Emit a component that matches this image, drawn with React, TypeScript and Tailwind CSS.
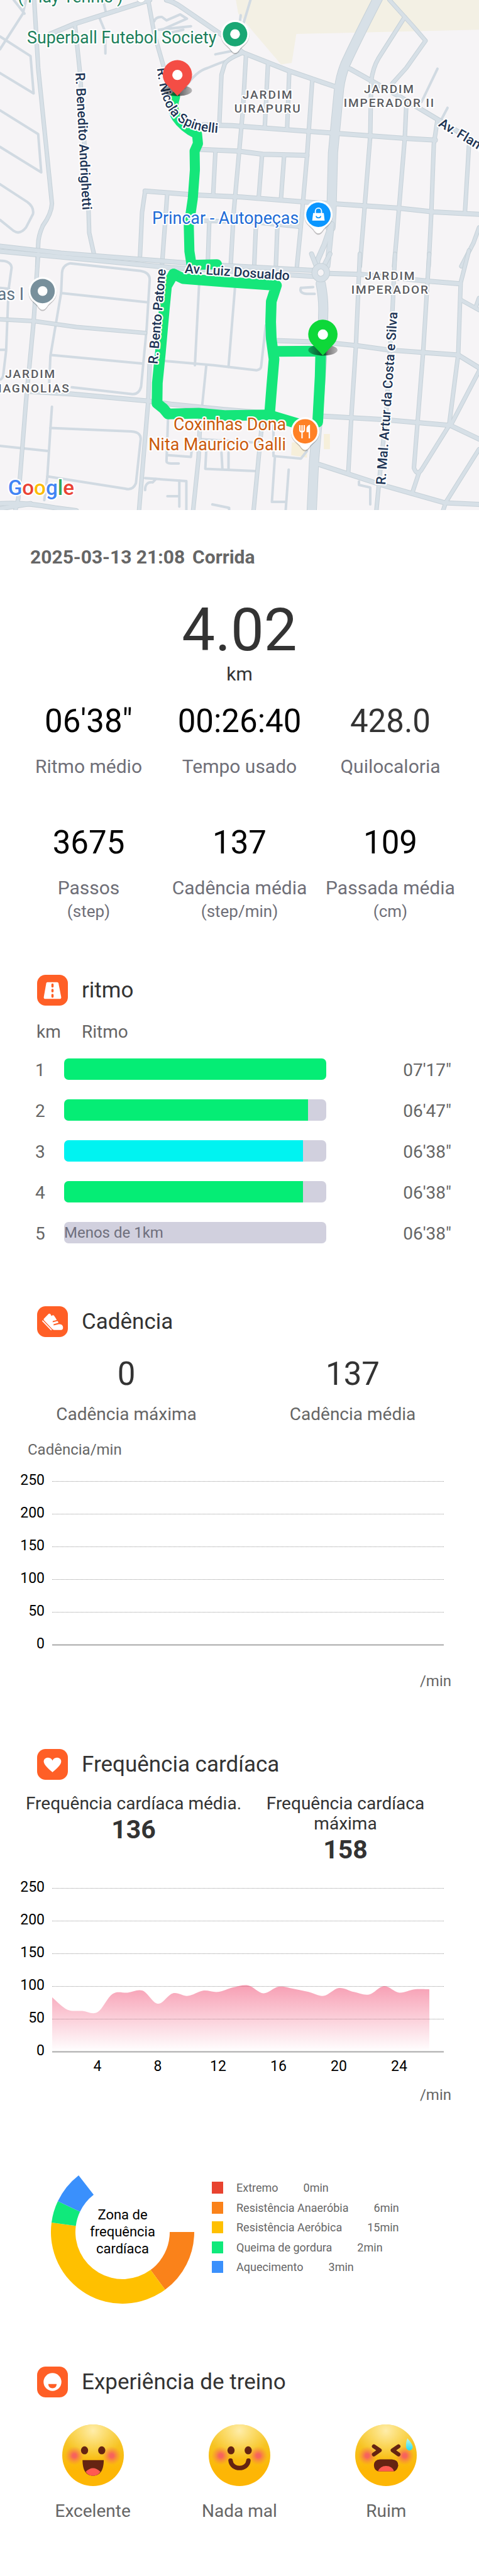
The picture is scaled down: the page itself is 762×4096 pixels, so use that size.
import type { ReactNode } from "react";

/* ---------- Map ---------- */

const MINOR_ROADS_NORTH = [
  "M112 0 L125 400 L160 1020 L170 1200 Q168 1260 140 1330 Q125 1390 125 1440 L122 1568",
  "M245 140 L262 430 L290 1250 L292 1370 L308 1500",
  "M485 0 L505 200 L540 420 L560 560",
  "M795 310 Q740 350 735 380 L725 440 L718 730",
  "M805 330 L795 650 L780 950 L765 1250 L755 1568",
  "M877 380 L867 740",
  "M947 420 L940 750",
  "M1022 475 L1005 920 L985 1330 L972 1568",
  "M705 895 L698 1140",
  "M858 910 L847 1160",
  "M930 920 L920 1165",
  "M475 1125 L465 1250 L458 1520",
  "M547 1150 L530 1568",
  "M670 1300 L840 1310 L980 1335",
  "M685 1300 L680 1568",
  "M838 1320 L832 1568",
  "M908 1335 L903 1568",
  "M1275 0 L1325 100 L1350 150 L1393 240 L1330 400 L1285 490 L1270 540",
  "M1325 100 L1240 340 Q1220 400 1215 480",
  "M1215 480 L1212 800 L1190 1300 L1178 1568",
  "M1330 620 L1325 815 L1305 1250 L1290 1568",
  "M1432 705 L1420 850 L1412 1250 L1403 1568",
  "M1535 860 L1522 1250",
  "M1568 1340 L1550 1430 L1510 1568",
];

const STREETS_NORTH = [
  "M165 200 L245 140 L490 0",
  "M545 0 Q570 10 600 50 L730 210 L795 310",
  "M795 310 L950 420 L1105 515",
  "M665 735 L760 740 L1100 785 L1325 815 L1425 825",
  "M650 880 L780 890 L860 908 L1005 915",
  "M475 1125 L640 1148 L790 1160 L1000 1190 L1095 1200 L1300 1225 L1420 1248 L1568 1262",
  "M1145 405 L1215 475 L1300 560 L1430 700 L1568 850",
];

const LANES_NORTH = [
  "M85 0 L75 80 L0 290",
  "M45 0 L80 80",
  "M0 215 L100 330 L110 550 L0 430",
  "M0 650 L125 790 L135 1015 L0 865",
  "M0 1085 L90 1190 Q112 1220 108 1260 L85 1340 Q65 1385 45 1360 L0 1295",
  "M322 90 L345 190 L345 315",
  "M340 20 L348 85",
  "M505 125 Q510 98 530 100 L545 120 L590 85 L612 110 L530 175",
  "M520 175 L625 155",
  "M540 200 L600 175",
  "M820 0 L795 150",
  "M788 90 L785 130",
  "M605 520 Q640 420 680 400 Q720 370 745 355",
  "M705 320 L760 300",
  "M1432 405 L1380 600",
  "M1465 635 L1440 720",
];

const MINOR_ROADS_SOUTH = [
  "M1178 -20 L1165 520 L1150 940 L1140 1270",
  "M1293 -20 L1285 300 L1265 900 L1240 1340 L1232 1492",
  "M1405 -20 L1385 560 L1355 1240 Q1365 1290 1380 1250 L1470 990",
  "M1535 -40 L1508 150 L1500 570 L1470 990",
  "M1508 250 L1568 310",
  "M1568 240 L1558 290",
  "M1568 670 L1475 990",
  "M1568 1130 L1460 1440 L1450 1492",
  "M1350 1385 L1372 1265",
  "M125 -20 L110 380 L85 850 L60 1420 L50 1492",
  "M490 620 L485 850 L455 1492",
  "M655 960 L650 1180 L632 1492",
  "M858 970 L830 1492",
  "M0 365 L110 375 L250 410 L475 445",
];

const STREETS_SOUTH = [
  "M0 -66 L200 -25 L450 10 L700 45 L1035 78",
  "M0 -36 L300 15 L560 60 L1030 112",
  "M1075 95 L1180 100 L1400 140 L1500 155",
  "M900 490 L1060 500 L1170 520 L1270 545 L1500 575 L1568 650",
  "M1060 935 L1250 955 L1475 990 L1568 1070",
  "M1045 1220 L1250 1340 L1455 1445 L1568 1455",
  "M100 790 L235 805 L480 845 L560 865 L730 895 L860 915",
  "M0 1450 Q80 1440 180 1475 L250 1492",
  "M0 1480 L100 1450",
  "M1020 -20 L1035 50",
  "M1080 -20 L1060 50",
];

const LANES_SOUTH = [
  "M0 20 Q35 20 38 60 L28 190 L20 550 L10 700 Q5 720 0 720",
  "M0 180 L30 185",
  "M0 545 H18",
  "M160 780 L165 580 L200 210 L203 90 Q205 45 230 35 L460 80 Q490 90 490 130 L480 420 L462 760 Q455 810 430 805 L235 765",
  "M200 210 L485 265",
  "M168 575 L465 625",
  "M170 880 L165 1010 L155 1290 L145 1430",
  "M165 1005 L430 1025 Q465 1030 460 1080 L445 1330 Q435 1375 410 1362 L155 1290",
  "M0 1110 L155 1140",
  "M652 150 L638 635",
  "M770 160 L748 645",
  "M540 610 L700 635 L840 665 Q855 660 855 640 L870 400",
  "M675 640 L662 870",
  "M550 950 L545 1200 Q545 1212 560 1214 H585",
  "M550 1165 L625 1175 L630 1100",
  "M475 1300 L610 1318 V1492",
  "M475 1370 Q475 1320 500 1325 L510 1305",
  "M587 1315 V1468",
  "M548 1407 H585",
  "M675 1140 L672 1245 L835 1258",
  "M725 1150 L728 1245",
  "M748 1150 V1245",
  "M655 1070 L830 1090",
  "M895 990 V1170 L985 1185 L1005 1140",
  "M900 1170 L890 1440 H935",
  "M945 1250 L935 1492",
  "M695 1455 L750 1475 V1492",
  "M985 180 Q978 212 1005 215 H1030",
  "M985 180 L1025 175",
  "M1175 1320 V1340 L1212 1355 V1455",
];

function Strokes({ paths, width, color }: { paths: string[]; width: number; color: string }) {
  return (
    <g fill="none" stroke={color} strokeWidth={width} strokeLinecap="round" strokeLinejoin="round">
      {paths.map((d) => (
        <path key={d} d={d} vectorEffect="non-scaling-stroke" />
      ))}
    </g>
  );
}

function RoadNetwork({ lanes, minor, streets, major }: { lanes: string[]; minor: string[]; streets: string[]; major: string[] }) {
  return (
    <>
      <Strokes paths={lanes} width={4} color="#d1dae2" />
      <Strokes paths={minor} width={7} color="#c6d1d8" />
      <Strokes paths={streets} width={8} color="#c6d1d8" />
      <Strokes paths={major} width={16} color="#c6d1d8" />
      <Strokes paths={minor} width={5} color="#d7e0e7" />
      <Strokes paths={streets} width={6} color="#d7e0e7" />
      <Strokes paths={major} width={14} color="#d7e0e7" />
    </>
  );
}

function PlacePin({ x, y, color, children }: { x: number; y: number; color: string; children: ReactNode }) {
  return (
    <g transform={`translate(${x} ${y})`}>
      <path
        d="M0 43 C-5 43 -8 39 -12 33 C-18 25 -32 19 -32 0 A32 32 0 0 1 32 0 C32 19 18 25 12 33 C8 39 5 43 0 43Z"
        fill="#000"
        opacity=".22"
        transform="translate(0 2)"
      />
      <path d="M0 42 C-5 42 -8 38 -12 32 C-18 25 -32 19 -32 0 A32 32 0 0 1 32 0 C32 19 18 25 12 32 C8 38 5 42 0 42Z" fill="#fff" />
      <circle r="27.5" fill={color} />
      {children}
    </g>
  );
}

function RoutePin({ x, y, color }: { x: number; y: number; color: string }) {
  return (
    <g transform={`translate(${x} ${y})`}>
      <ellipse cx="0" cy="-12" rx="33" ry="12.5" fill="url(#pin-shadow)" />
      <path d="M0 0 L-25 -26 A33 33 0 1 1 25 -26Z" fill={color} />
      <circle cy="-47" r="11.5" fill="#fff" />
    </g>
  );
}

function RouteMap() {
  return (
    <svg viewBox="0 0 1080 1150" className="block w-full" role="img" aria-label="Mapa do percurso" fontFamily="Roboto, sans-serif">
      <defs>
        <linearGradient id="pin-shadow">
          <stop offset="0" stopColor="#000" stopOpacity=".3" />
          <stop offset=".5" stopColor="#000" stopOpacity=".65" />
          <stop offset="1" stopColor="#000" stopOpacity=".25" />
        </linearGradient>
        <path id="nicola-spinelli" d="M354 154 C360 200 366 235 390 262 C415 288 450 301 530 301" />
      </defs>
      <rect width="1080" height="1150" fill="#f6f4f6" />

      <g transform="scale(.6888 .3827)">
        <path d="M772 0 H1568 V175 L970 200 L955 370 L920 380 L830 190 L780 80Z" fill="#f3f0e4" />
        <RoadNetwork
          lanes={LANES_NORTH}
          minor={MINOR_ROADS_NORTH}
          streets={STREETS_NORTH}
          major={["M1240 -20 Q1160 260 1130 380 Q1115 450 1110 520 L1090 900 L1085 1250 L1082 1340"]}
        />
        <Strokes paths={["M1085 1320 L1062 1440 L1040 1530 L1036 1568", "M1086 1320 L1072 1568"]} width={9} color="#c6d1d8" />
        <Strokes paths={["M1085 1320 L1062 1440 L1040 1530 L1036 1568", "M1086 1320 L1072 1568"]} width={7} color="#d7e0e7" />
      </g>

      <g transform="translate(0 580) scale(.6888 .3827)">
        <path d="M955 1090 H1005 V1180 L953 1165Z M1060 1040 H1080 V1130 H1060Z" fill="#f6efda" />
        <RoadNetwork
          lanes={LANES_SOUTH}
          minor={MINOR_ROADS_SOUTH}
          streets={STREETS_SOUTH}
          major={["M1050 155 Q1060 250 1058 330 L1055 560 L1040 950 L1028 1200 L1020 1510"]}
        />
        <ellipse cx="1050" cy="90" rx="20" ry="38" fill="#f6f4f6" stroke="#c6d1d8" strokeWidth="10" vectorEffect="non-scaling-stroke" />
        <ellipse cx="1050" cy="90" rx="20" ry="38" fill="none" stroke="#d7e0e7" strokeWidth="8" vectorEffect="non-scaling-stroke" />
      </g>

      <g transform="scale(.6888 .3827)">
        <Strokes
          paths={["M573 570 Q560 640 578 690 Q600 750 645 790 L648 845 L637 890 L638 1000 L631 1170 L618 1330 L620 1480 L627 1560 L710 1556"]}
          width={16}
          color="#15e67a"
        />
      </g>
      <g transform="translate(0 580) scale(.6888 .3827)">
        <Strokes
          paths={[
            "M568 98 L600 125 L740 145 L905 165 L888 260 L886 380 L888 480 L897 600 L890 750 L883 910",
            "M568 98 L545 170 L538 300 L525 560 L515 740 L514 860 L535 890 L550 922 L650 918 L740 932 L880 928 L985 985",
            "M900 554 L1050 552 L1048 700 L1040 970",
          ]}
          width={17}
          color="#15e67a"
        />
      </g>

      <g stroke="#fff" strokeWidth="6" strokeLinejoin="round" paintOrder="stroke">
        <g fontSize="38" fill="#1d7f5c">
          <text x="40" y="5">( Play Tennis )</text>
          <text x="61" y="98">Superball Futebol Society</text>
        </g>
        <text x="343" y="504" fontSize="38" fill="#1e6bd6">Princar - Autopeças</text>
        <g fontSize="38" fill="#cb5a0c" textAnchor="end">
          <text x="645" y="970">Coxinhas Dona</text>
          <text x="645" y="1015">Nita Mauricio Galli</text>
        </g>
        <text x="54" y="676" fontSize="38" fill="#5c7284" textAnchor="end">as I</text>

        <g fontSize="27" fontWeight="500" fill="#5a5b5f" textAnchor="middle" className="tracking-widest">
          <text x="604" y="222">JARDIM</text>
          <text x="604" y="253">UIRAPURU</text>
          <text x="878" y="210">JARDIM</text>
          <text x="878" y="241">IMPERADOR II</text>
          <text x="880" y="631">JARDIM</text>
          <text x="880" y="662">IMPERADOR</text>
          <text x="69" y="852">JARDIM</text>
          <text x="69" y="884">MAGNOLIAS</text>
        </g>

        <g fontSize="30" fontWeight="500" fill="#1d3455">
          <text transform="translate(170 164) rotate(87)">R. Benedito Andrighetti</text>
          <text>
            <textPath href="#nicola-spinelli">R. Nicola Spinelli</textPath>
          </text>
          <text transform="translate(416 615) rotate(4)">Av. Luiz Dosualdo</text>
          <text transform="translate(355 821) rotate(-85)">R. Bento Patone</text>
          <text transform="translate(869 1093) rotate(-86)">R. Mal. Artur da Costa e Silva</text>
          <text transform="translate(987 283) rotate(31)">Av. Flamboyant</text>
        </g>

        <text x="18" y="1116" fontSize="47" fontWeight="500">
          <tspan fill="#4285f4">G</tspan>
          <tspan fill="#ea4335">o</tspan>
          <tspan fill="#fbbc05">o</tspan>
          <tspan fill="#4285f4">g</tspan>
          <tspan fill="#34a853">l</tspan>
          <tspan fill="#ea4335">e</tspan>
        </text>
      </g>

      <path d="M306 -4 Q312 6 318 6 Q324 6 330 -4Z" fill="#fff" stroke="#c3c7cb" strokeWidth="1" />
      <PlacePin x={530} y={77} color="#1aa774">
        <circle r="11" fill="#fff" />
      </PlacePin>
      <PlacePin x={96} y={656} color="#78909c">
        <circle r="11" fill="#fff" />
      </PlacePin>
      <PlacePin x={718} y={484} color="#0a96ff">
        <path d="M-12 -4 H12 L14 13 H-14Z" fill="#fff" />
        <path d="M-7 -3 V-8 A7 7 0 0 1 7 -8 V-3" fill="none" stroke="#fff" strokeWidth="2.5" />
        <path d="M-5 3 A5 4 0 0 0 5 3" fill="none" stroke="#0a96ff" strokeWidth="2.5" />
      </PlacePin>
      <PlacePin x={688} y={972} color="#ff8126">
        <path d="M-12 -14 V-3 Q-12 1 -7 1 Q-2 1 -2 -3 V-14 M-7 -14 V16" fill="none" stroke="#fff" strokeWidth="3" />
        <path d="M11 -15 V16 H8 V2 H3 V-5 Q3 -13 11 -15Z" fill="#fff" />
      </PlacePin>
      <RoutePin x={400} y={216} color="#f44d45" />
      <RoutePin x={728} y={801} color="#0ed839" />
    </svg>
  );
}

/* ---------- Section headings ---------- */

function RoadIcon() {
  return (
    <>
      <path d="M23 16.500 H45 Q47.500 16.500 48 19 L54 50 Q54.500 54 50 54 H19 Q14.500 54 15 50 L20.500 19 Q21 16.500 23 16.500Z" fill="#fff" />
      <path d="M34.500 22 V26 M34.500 34 V37 M34.500 45 V49" stroke="#ff5f26" strokeWidth="5" strokeLinecap="round" />
    </>
  );
}

function ShoeIcon() {
  return (
    <>
      <path
        d="M15 28 L26 17 Q30 15 32 22 Q36 19 38 21 L42 27 L44 31 L35 33 V36 L46 33 L48 37 L37 40 V43 L49 40 Q57 40 58 46 Q59 53 53 53 H38 Q36 53 34 51 L16 32 Q14 30 15 28Z"
        fill="#fff"
      />
      <path d="M12.500 33 L31.500 52.500" stroke="#fff" strokeWidth="2.500" strokeLinecap="round" />
    </>
  );
}

function HeartIcon() {
  return (
    <path
      d="M34.500 52 C32 50 18 39 15.500 31 C13 23 20 19 25 19.500 C29 20 33 22 34.500 26 C36 22 40 20 44 19.500 C49 19 56 23 53.500 31 C51 39 37 50 34.500 52Z"
      fill="#fff"
    />
  );
}

function SmileIcon() {
  return (
    <>
      <circle cx="34.500" cy="34.500" r="20" fill="#fff" />
      <path d="M25 39 H44 Q43 48.500 34.500 48.500 Q26 48.500 25 39Z" fill="#ff5f26" />
    </>
  );
}

function SectionHeading({ icon, children }: { icon: ReactNode; children: ReactNode }) {
  return (
    <div className="flex items-center gap-[22px] pl-[59px]">
      <svg viewBox="0 0 69 69" className="size-[49px]" aria-hidden="true">
        <rect width="69" height="69" rx="19" fill="#ff5f26" />
        {icon}
      </svg>
      <h2 className="text-[35px] leading-[49px] text-[#333]">{children}</h2>
    </div>
  );
}

/* ---------- Summary ---------- */

type Stat = { value: string; label: string; unit?: string; soft?: boolean };

const STATS: Stat[][] = [
  [
    { value: "06'38\"", label: "Ritmo médio" },
    { value: "00:26:40", label: "Tempo usado" },
    { value: "428.0", label: "Quilocaloria", soft: true },
  ],
  [
    { value: "3675", label: "Passos", unit: "(step)" },
    { value: "137", label: "Cadência média", unit: "(step/min)" },
    { value: "109", label: "Passada média", unit: "(cm)" },
  ],
];

function Summary() {
  return (
    <section>
      <h1 className="mt-[55px] flex gap-3 pl-12 text-[30px] leading-10 font-bold text-[#666]">
        <span>2025-03-13 21:08</span>
        <span>Corrida</span>
      </h1>
      <div className="mt-[49px] text-center text-[#333]">
        <p className="text-[94px] leading-[94px]">4.02</p>
        <p className="mt-[3px] text-[30px] leading-10">km</p>
      </div>
      <div className="mt-[25px] flex flex-col gap-[71px] px-[21px]">
        {STATS.map((row, i) => (
          <dl key={i} className="grid grid-cols-3 text-center">
            {row.map((s) => (
              <div key={s.label} className="flex flex-col-reverse justify-end">
                <dt className="mt-[22px] whitespace-nowrap text-[#6f6f78]">
                  <span className="block text-[30px] leading-10">{s.label}</span>
                  {s.unit && <span className="block text-[26px] leading-[34px]">{s.unit}</span>}
                </dt>
                <dd className={s.soft ? "text-[51px] leading-[60px] text-[#333]" : "text-[51px] leading-[60px] text-black"}>{s.value}</dd>
              </div>
            ))}
          </dl>
        ))}
      </div>
    </section>
  );
}

/* ---------- Pace ---------- */

const SPLITS = [
  { km: 1, pace: "07'17\"", share: 100, color: "bg-[#05ed75]" },
  { km: 2, pace: "06'47\"", share: 93.1, color: "bg-[#05ed75]" },
  { km: 3, pace: "06'38\"", share: 91.2, color: "bg-[#00f3f1]" },
  { km: 4, pace: "06'38\"", share: 91.2, color: "bg-[#05ed75]" },
  { km: 5, pace: "06'38\"", share: 0, color: "bg-[#05ed75]", note: "Menos de 1km" },
];

function Pace() {
  return (
    <section className="mt-[84px]">
      <SectionHeading icon={<RoadIcon />}>ritmo</SectionHeading>
      <div className="mt-6 pr-11 pl-14">
        <table className="w-full table-fixed text-[28px] text-[#666]">
          <thead>
            <tr className="h-[60px] align-top leading-9">
              <th scope="col" className="w-[46px] pl-[2px] text-left font-normal">km</th>
              <th scope="col" className="w-[63%] pl-7 text-left font-normal">Ritmo</th>
              <td />
            </tr>
          </thead>
          <tbody>
            {SPLITS.map((s) => (
              <tr key={s.km} className="h-[65px] align-top leading-[38px]">
                <th scope="row" className="text-left font-normal">{s.km}</th>
                <td>
                  <div className="h-[34px] overflow-hidden rounded-[7px] bg-[#d1d0de]">
                    {s.note ? (
                      <p className="text-2xl leading-[34px] text-[#6f6f7d]">{s.note}</p>
                    ) : (
                      <div className={`h-full ${s.color}`} style={{ width: `${s.share}%` }} />
                    )}
                  </div>
                </td>
                <td className="text-right">{s.pace}</td>
              </tr>
            ))}
          </tbody>
        </table>
      </div>
    </section>
  );
}

/* ---------- Line charts ---------- */

const LEVELS = [250, 200, 150, 100, 50, 0];
const LEFT = 83;
const RIGHT = 706;
const TOP = 34;
const STEP = 52;
const BASE = TOP + 5 * STEP;

function smoothPath(values: number[]) {
  const pts = values.map((v, i) => [LEFT + i * 24, BASE - (v / 50) * STEP]);
  let d = `M${pts[0][0]} ${pts[0][1]}`;
  for (let i = 0; i < pts.length - 1; i++) {
    const p0 = pts[Math.max(i - 1, 0)];
    const p1 = pts[i];
    const p2 = pts[i + 1];
    const p3 = pts[Math.min(i + 2, pts.length - 1)];
    d += ` C${p1[0] + (p2[0] - p0[0]) / 6} ${p1[1] + (p2[1] - p0[1]) / 6} ${p2[0] - (p3[0] - p1[0]) / 6} ${p2[1] - (p3[1] - p1[1]) / 6} ${p2[0]} ${p2[1]}`;
  }
  return `${d} V${BASE} H${LEFT}Z`;
}

function LineChart({ values, ticks, label }: { values?: number[]; ticks?: number[]; label: string }) {
  return (
    <svg viewBox={ticks ? "0 0 762 340" : "0 0 762 320"} className="block w-full" role="img" aria-label={label} fontFamily="Roboto, sans-serif" fontSize="23">
      <defs>
        <linearGradient id="area-fade" gradientUnits="userSpaceOnUse" x1="0" y1={BASE - 105} x2="0" y2={BASE}>
          <stop offset="0" stopColor="#f0476f" stopOpacity=".52" />
          <stop offset="1" stopColor="#f0476f" stopOpacity="0" />
        </linearGradient>
      </defs>
      {LEVELS.map((level, i) => (
        <g key={level}>
          <line
            x1={LEFT}
            x2={RIGHT}
            y1={TOP + i * STEP + 0.5}
            y2={TOP + i * STEP + 0.5}
            stroke={level === 0 ? "#a9a9a9" : "#999"}
            strokeWidth={level === 0 ? 2 : 1}
            strokeDasharray={level === 0 ? undefined : "1 1"}
          />
          <text x="71" y={TOP + i * STEP + 6} textAnchor="end">{level}</text>
        </g>
      ))}
      {values && <path d={smoothPath(values)} fill="url(#area-fade)" />}
      {ticks?.map((t) => (
        <text key={t} x={LEFT + (t - 1) * 24} y={BASE + 31} textAnchor="middle">{t}</text>
      ))}
    </svg>
  );
}

function Cadence() {
  return (
    <section className="mt-[69px]">
      <SectionHeading icon={<ShoeIcon />}>Cadência</SectionHeading>
      <dl className="mt-[29px] grid grid-cols-2 px-[21px] text-center">
        {[
          ["0", "Cadência máxima"],
          ["137", "Cadência média"],
        ].map(([value, label]) => (
          <div key={label} className="flex flex-col-reverse">
            <dt className="mt-4 text-[28px] leading-9 text-[#666]">{label}</dt>
            <dd className="text-[51px] leading-[60px] text-[#333]">{value}</dd>
          </div>
        ))}
      </dl>
      <p className="mt-[22px] pl-11 text-2xl text-[#666]">Cadência/min</p>
      <LineChart label="Cadência por minuto" />
      <p className="mt-4 pr-11 text-right text-2xl text-[#666]">/min</p>
    </section>
  );
}

/* ---------- Heart rate ---------- */

const HEART_RATE = [83, 64, 62, 60, 88, 90, 93, 73, 89, 85, 93, 91, 98, 101, 89, 99, 96, 91, 85, 97, 91, 87, 100, 90, 95, 95];

const ZONES = [
  { name: "Extremo", minutes: 0, fill: "#e8432f", swatch: "bg-[#e8432f]" },
  { name: "Resistência Anaeróbia", minutes: 6, fill: "#fa821a", swatch: "bg-[#fa821a]" },
  { name: "Resistência Aeróbica", minutes: 15, fill: "#ffc000", swatch: "bg-[#ffc000]" },
  { name: "Queima de gordura", minutes: 2, fill: "#10e97b", swatch: "bg-[#10e97b]" },
  { name: "Aquecimento", minutes: 3, fill: "#3a90fc", swatch: "bg-[#3a90fc]" },
];

const DEGREES_PER_MINUTE = 8.93;

function point(radius: number, degrees: number) {
  const a = (degrees * Math.PI) / 180;
  return `${114 + radius * Math.cos(a)} ${114 + radius * Math.sin(a)}`;
}

function ZoneRing() {
  let angle = 0;
  return (
    <svg viewBox="0 0 228 228" className="size-[228px]" aria-hidden="true" fontFamily="Roboto, sans-serif" fontSize="22" textAnchor="middle">
      {ZONES.map((z) => {
        const from = angle;
        const to = angle + z.minutes * DEGREES_PER_MINUTE;
        angle = to;
        return (
          <path key={z.name} fill={z.fill} d={`M${point(114, from)} A114 114 0 0 1 ${point(114, to)} L${point(75, to)} A75 75 0 0 0 ${point(75, from)}Z`} />
        );
      })}
      <text x="114" y="94">Zona de</text>
      <text x="114" y="121">frequência</text>
      <text x="114" y="148">cardíaca</text>
    </svg>
  );
}

function HeartRate() {
  return (
    <section className="mt-[92px]">
      <SectionHeading icon={<HeartIcon />}>Frequência cardíaca</SectionHeading>
      <dl className="mt-[22px] grid grid-cols-2 px-11 text-center text-[#333]">
        <div className="flex flex-col items-center">
          <dt className="text-[28px] leading-8 whitespace-nowrap">Frequência cardíaca média.</dt>
          <dd className="text-[41px] leading-[50px] font-bold">136</dd>
        </div>
        <div>
          <dt className="text-[28px] leading-8">Frequência cardíaca máxima</dt>
          <dd className="text-[41px] leading-[50px] font-bold">158</dd>
        </div>
      </dl>
      <div className="mt-[2px]">
        <LineChart label="Frequência cardíaca por minuto" values={HEART_RATE} ticks={[4, 8, 12, 16, 20, 24]} />
      </div>
      <p className="mt-[7px] pr-11 text-right text-2xl text-[#666]">/min</p>

      <div className="mt-[88px] flex items-start gap-7 pl-[81px]">
        <ZoneRing />
        <ul className="mt-[34px] flex h-[145px] flex-col justify-between text-lg leading-[19px] text-[#666]">
          {ZONES.map((z) => (
            <li key={z.name} className="flex items-center">
              <span className={`mr-[21px] h-[19px] w-[18px] ${z.swatch}`} />
              <span>{z.name}</span>
              <span className="ml-10">{z.minutes}min</span>
            </li>
          ))}
        </ul>
      </div>
    </section>
  );
}

/* ---------- Training experience ---------- */

function Face({ children }: { children: ReactNode }) {
  return (
    <svg viewBox="10 11 138 138" className="size-[98px]" aria-hidden="true">
      <defs>
        <linearGradient id="face-base" x1="0" y1="0" x2="0" y2="1">
          <stop offset="0" stopColor="#f6cf45" />
          <stop offset=".45" stopColor="#f7bf17" />
          <stop offset=".75" stopColor="#fdb605" />
        </linearGradient>
        <radialGradient id="face-shine" cx=".5" cy=".1" r=".48">
          <stop offset="0" stopColor="#ffedaa" />
          <stop offset="1" stopColor="#ffe680" stopOpacity="0" />
        </radialGradient>
        <radialGradient id="cheek">
          <stop offset=".2" stopColor="#f7635c" />
          <stop offset="1" stopColor="#f98a3c" stopOpacity="0" />
        </radialGradient>
        <linearGradient id="sweat" x1="0" y1="0" x2="0" y2="1">
          <stop offset="0" stopColor="#c4f5e8" />
          <stop offset="1" stopColor="#22def5" />
        </linearGradient>
      </defs>
      <circle cx="79" cy="80" r="69" fill="url(#face-base)" />
      <circle cx="79" cy="80" r="69" fill="url(#face-shine)" />
      <circle cx="37" cy="81" r="21" fill="url(#cheek)" />
      <circle cx="121" cy="81" r="21" fill="url(#cheek)" />
      {children}
    </svg>
  );
}

function OpenEyes() {
  return (
    <g fill="#652412">
      <ellipse cx="60" cy="69" rx="8" ry="9" />
      <ellipse cx="98.500" cy="69" rx="8" ry="9" />
    </g>
  );
}

function Experience() {
  const options = [
    {
      label: "Excelente",
      face: (
        <>
          <OpenEyes />
          <path d="M55.500 91 H103 C103 110 97 126 79 126 C61 126 55.500 110 55.500 91Z" fill="#652412" />
          <path d="M62.500 117 Q79 101 95.500 117 Q90 126 79 126 Q68 126 62.500 117Z" fill="#ff5a50" />
        </>
      ),
    },
    {
      label: "Nada mal",
      face: (
        <>
          <OpenEyes />
          <path d="M59 92 C61 114 97 114 99 92" fill="none" stroke="#652412" strokeWidth="10" strokeLinecap="round" />
        </>
      ),
    },
    {
      label: "Ruim",
      face: (
        <>
          <path d="M52 60 L65 69 L52 78 M107 60 L94 69 L107 78" fill="none" stroke="#652412" strokeWidth="9" strokeLinecap="round" strokeLinejoin="round" />
          <path d="M66 89 H92 Q107 90 106.500 103 Q105 113 98 116 H61 Q52 113 52 102 Q52 90 66 89Z" fill="#652412" />
          <path d="M61 116 Q66 104 79 104 Q93 104 97 116Z" fill="#ff5a50" />
          <path d="M127 42 Q139 55 139 61 A7.500 8 0 0 1 124 61 Q123 52 127 42Z" fill="url(#sweat)" />
        </>
      ),
    },
  ];
  return (
    <section className="mt-[100px]">
      <SectionHeading icon={<SmileIcon />}>Experiência de treino</SectionHeading>
      <div className="mt-[43px] grid grid-cols-3 px-[31px]">
        {options.map((o) => (
          <button key={o.label} type="button" className="flex flex-col items-center gap-[22px] text-[28px] leading-9 text-[#666]">
            <Face>{o.face}</Face>
            {o.label}
          </button>
        ))}
      </div>
    </section>
  );
}

export default function App() {
  return (
    <main className="bg-white pb-[84px] font-[Roboto,sans-serif]">
      <RouteMap />
      <Summary />
      <Pace />
      <Cadence />
      <HeartRate />
      <Experience />
    </main>
  );
}
